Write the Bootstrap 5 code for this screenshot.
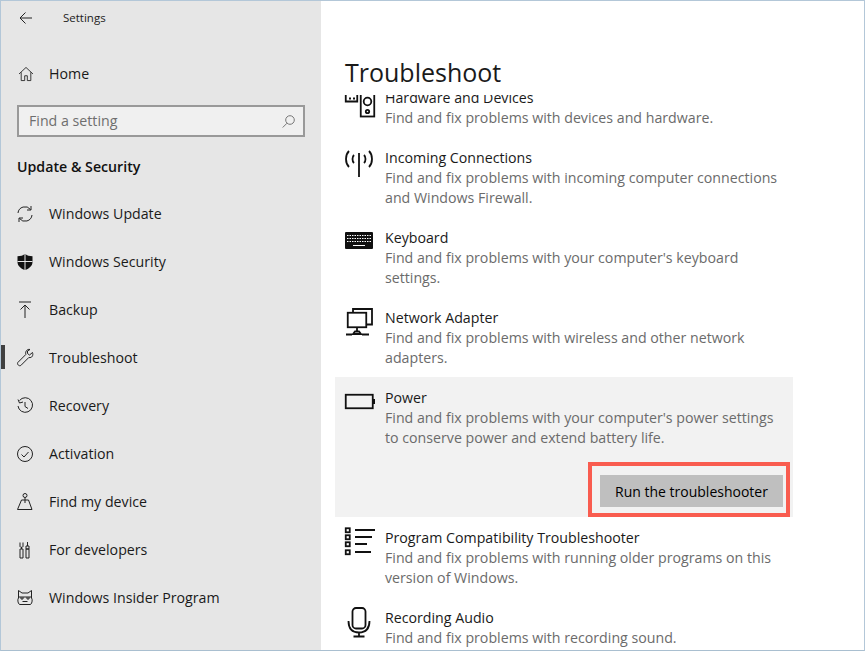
<!DOCTYPE html>
<html lang="en">
<head>
<meta charset="utf-8">
<title>Settings</title>
<link rel="stylesheet" href="https://cdn.jsdelivr.net/npm/bootstrap@5.3.0/dist/css/bootstrap.min.css">
<style>
html,body{margin:0;height:651px;overflow:hidden;background:#fff}
body{font-family:"Open Sans","Noto Sans",sans-serif;font-size:14.2px;line-height:20px;color:#1a1a1a}
.win{width:865px;height:651px;border:1px solid #b3c7d8;border-bottom-color:#a9bfd0}
.side{width:320px;background:#e6e6e6;flex:none}
.head-row{height:33px;margin-bottom:16px;padding-left:18px;font-size:11.5px;color:#222}
.head-row span{margin-left:30px}
.side-row{height:48px;padding-left:16px;color:#1a1a1a}
.side-row svg{width:16px;height:18px;margin-right:16px;flex:none;overflow:visible}
.side-row.home-row{padding-left:18px}
.side-row.home-row svg{width:14px}
.side-row.cur::before{content:"";position:absolute;left:0;top:11px;width:4px;height:24px;background:#404040}
.ic{fill:none;stroke:#222;stroke-width:1}
.find{margin:7px 0 0 16px;width:288px;height:32px;border:2px solid #999;background:#f0f0f0;padding:0 8px 0 10px;color:#6e6e6e}
.sect{margin:20px 0 13px 16px;font-weight:600;color:#111}
.main{min-width:0;padding-top:52px}
.page-title{font-size:25px;line-height:39px;margin:0 0 3px 24px;font-weight:400;color:#1a1a1a}
.clip{overflow:hidden;min-height:0;padding-left:14px}
.clip-in{margin-top:-18px;width:458px}
.entry{padding:11px 3px 9px 10px}
.entry.open{background:#f2f2f2;padding-bottom:0}
.ent-ic{width:30px;height:30px;margin-right:10px;flex:none;overflow:visible}
.ent-t{color:#1a1a1a;white-space:nowrap}
.ent-d{color:#6b6b6b;white-space:nowrap}
.mark-box{border:4px solid #f95c4f;margin-top:14px;padding:9px 3px 6px 8px;width:202px}
.run{width:183px;height:32px;background:#bfbfbf;border:0;border-radius:0;color:#000;font-size:14px;line-height:20px;padding:1px 0 0}
.st{fill:none;stroke:#111;stroke-width:1.8}
.fl{fill:#111}
</style>
</head>
<body>
<div class="win d-flex">
  <aside class="side d-flex flex-column">
    <div class="head-row d-flex align-items-center">
      <svg width="14" height="14" viewBox="0 0 14 14" class="ic"><path d="M13 7H1M6.500 1.500 1 7l5.500 5.500"/></svg>
      <span>Settings</span>
    </div>
    <div class="side-row home-row d-flex align-items-center">
      <svg viewBox="0 0 16 18" class="ic"><path d="M0 9 8 1.500 16 9M2.500 7v9.500h4V11h3v5.500h4V7"/></svg>
      <span>Home</span>
    </div>
    <div class="find d-flex align-items-center justify-content-between">
      <span>Find a setting</span>
      <svg width="13" height="13" viewBox="0 0 13 13" fill="none" stroke="#777"><circle cx="8" cy="5" r="4.300"/><path d="M5 8.200 .7 12.500"/></svg>
    </div>
    <div class="sect">Update &amp; Security</div>

    <div class="side-row d-flex align-items-center">
      <svg viewBox="0 0 16 18" class="ic"><path d="M1 8a7 7 0 0 1 12.500-3.500M15 10a7 7 0 0 1-12.500 3.500M14 1v4h-4M2 17v-4h4"/></svg>
      <span>Windows Update</span>
    </div>
    <div class="side-row d-flex align-items-center">
      <svg viewBox="0 0 16 18"><path fill="#111" d="M8 1c2 1.500 4.500 2.200 7.500 2.200V9c0 3.800-3 6.500-7.500 8C3.500 15.500.5 12.800.5 9V3.200C3.500 3.200 6 2.500 8 1z"/><path stroke="#e6e6e6" stroke-width="1" d="M8 1v16M.5 8.500h15"/></svg>
      <span>Windows Security</span>
    </div>
    <div class="side-row d-flex align-items-center">
      <svg viewBox="0 0 16 18" class="ic"><path d="M2 1h12M8 17V4M3.500 8.500 8 4l4.500 4.500"/></svg>
      <span>Backup</span>
    </div>
    <div class="side-row cur d-flex align-items-center position-relative">
      <svg viewBox="0 0 16 18" class="ic"><path d="M15.500 3.500 12.500 6l-2-1.500L10.500 2l2.500-1.500C10.500-.2 8 2 8.800 5.500L.8 13.500c-1 1.800 1.200 4 3 3l8-8c3.300.7 4.700-2.200 3.700-5z"/></svg>
      <span>Troubleshoot</span>
    </div>
    <div class="side-row d-flex align-items-center">
      <svg viewBox="0 0 16 18" class="ic"><path d="M2.500 3.500A7.300 7.300 0 1 1 1 9M1 2.500 2.500 6l3.500-1M8 5v4.500l3 2"/></svg>
      <span>Recovery</span>
    </div>
    <div class="side-row d-flex align-items-center">
      <svg viewBox="0 0 16 18" class="ic"><circle cx="8" cy="9" r="7.500"/><path d="m4.500 9.500 2.500 2.500 4.500-5"/></svg>
      <span>Activation</span>
    </div>
    <div class="side-row d-flex align-items-center">
      <svg viewBox="0 0 16 18" class="ic"><circle cx="8" cy="2.500" r="2"/><path d="M8 4.500V10M4.500 7H11.500L15 16.500H.5L4.500 7z"/></svg>
      <span>Find my device</span>
    </div>
    <div class="side-row d-flex align-items-center">
      <svg viewBox="0 0 16 18" class="ic"><path d="M3 1.500v4c0 1 3 1 3 0v-4M4.500 6v2M3 8h3v9H3zM10.500 1v4M9 5h3v3H9zM9 8h3v9H9z"/></svg>
      <span>For developers</span>
    </div>
    <div class="side-row d-flex align-items-center">
      <svg viewBox="0 0 16 18" class="ic"><path d="M1.500 1.500 5 4h6l3.500-2.500V9c1 1 1 5-1 6.500h-11c-2-1.500-2-5.500-1-6.500zM1 8h14M4 8v2h2V8M10 8v2h2V8M5.500 12.500h5"/></svg>
      <span>Windows Insider Program</span>
    </div>
  </aside>

  <main class="main flex-grow-1 d-flex flex-column">
    <h1 class="page-title">Troubleshoot</h1>
    <div class="clip flex-grow-1">
      <div class="clip-in">
        <div class="entry d-flex">
          <svg class="ent-ic" viewBox="0 0 30 30"><path class="st" d="M.75 3v10.500h11.500V3M4 10.500h2M8 10.500h2"/><rect class="st" x="15.750" y="2" width="13.500" height="26.500"/><circle class="st" cx="22.500" cy="13.500" r="3.800"/><circle class="st" cx="22.500" cy="23.500" r="1.700"/></svg>
          <div><div class="ent-t">Hardware and Devices</div><div class="ent-d">Find and fix problems with devices and hardware.</div></div>
        </div>
        <div class="entry d-flex">
          <svg class="ent-ic" viewBox="0 0 30 30"><path class="st" d="M14 5v24M4 3C0 7 0 15 4 19M9 7c-2 2-2 6 0 8M24 3c4 4 4 12 0 16M19 7c2 2 2 6 0 8"/></svg>
          <div><div class="ent-t">Incoming Connections</div><div class="ent-d">Find and fix problems with incoming computer connections<br>and Windows Firewall.</div></div>
        </div>
        <div class="entry d-flex">
          <svg class="ent-ic" viewBox="0 0 30 30"><rect class="fl" x="0" y="4" width="28" height="17" rx="1"/><path stroke="#fff" stroke-dasharray="1.500 1" d="M2 7.500h24M2 10.500h24M2 13.500h24"/><path stroke="#fff" d="M8 17.500h12"/></svg>
          <div><div class="ent-t">Keyboard</div><div class="ent-d">Find and fix problems with your computer's keyboard<br>settings.</div></div>
        </div>
        <div class="entry d-flex">
          <svg class="ent-ic" viewBox="0 0 30 30"><path class="st" d="M8 4V1h19v15.500h-6"/><rect class="st" x="2.750" y="4.750" width="18.500" height="14.500" fill="#fff"/><path class="st" d="M12 19v4M8 26l2-2.500h4l2 2.500zM1 26.500h6M17 26.500h7"/></svg>
          <div><div class="ent-t">Network Adapter</div><div class="ent-d">Find and fix problems with wireless and other network<br>adapters.</div></div>
        </div>
        <div class="entry open">
          <div class="d-flex">
            <svg class="ent-ic" viewBox="0 0 30 30"><rect class="st" x=".75" y="6.750" width="27" height="13.500"/><rect class="fl" x="28" y="11" width="2" height="5"/></svg>
            <div><div class="ent-t">Power</div><div class="ent-d">Find and fix problems with your computer's power settings<br>to conserve power and extend battery life.</div></div>
          </div>
          <div class="d-flex justify-content-end">
            <div class="mark-box"><button type="button" class="btn run d-block">Run the troubleshooter</button></div>
          </div>
        </div>
        <div class="entry d-flex">
          <svg class="ent-ic" viewBox="0 0 30 30"><path class="st" d="M10 2h20M10 9h17M10 16h12M10 24h16"/><rect class="st" x=".75" y=".25" width="4" height="4"/><rect class="st" x=".75" y="7.250" width="4" height="4"/><rect class="st" x=".75" y="14.250" width="4" height="4"/><rect class="st" x=".75" y="22.250" width="4" height="4"/></svg>
          <div><div class="ent-t">Program Compatibility Troubleshooter</div><div class="ent-d">Find and fix problems with running older programs on this<br>version of Windows.</div></div>
        </div>
        <div class="entry d-flex">
          <svg class="ent-ic" viewBox="0 0 30 30"><rect class="st" x="7.500" y="0" width="13" height="20.500" rx="3.500"/><path class="st" d="M3.500 13c0 7 3.500 11.500 10.500 11.500S24.500 20 24.500 13M14 24.500V28.500M8.500 28.500h11"/></svg>
          <div><div class="ent-t">Recording Audio</div><div class="ent-d">Find and fix problems with recording sound.</div></div>
        </div>
      </div>
    </div>
  </main>
</div>
<script src="https://cdn.jsdelivr.net/npm/bootstrap@5.3.0/dist/js/bootstrap.bundle.min.js"></script>
</body>
</html>
